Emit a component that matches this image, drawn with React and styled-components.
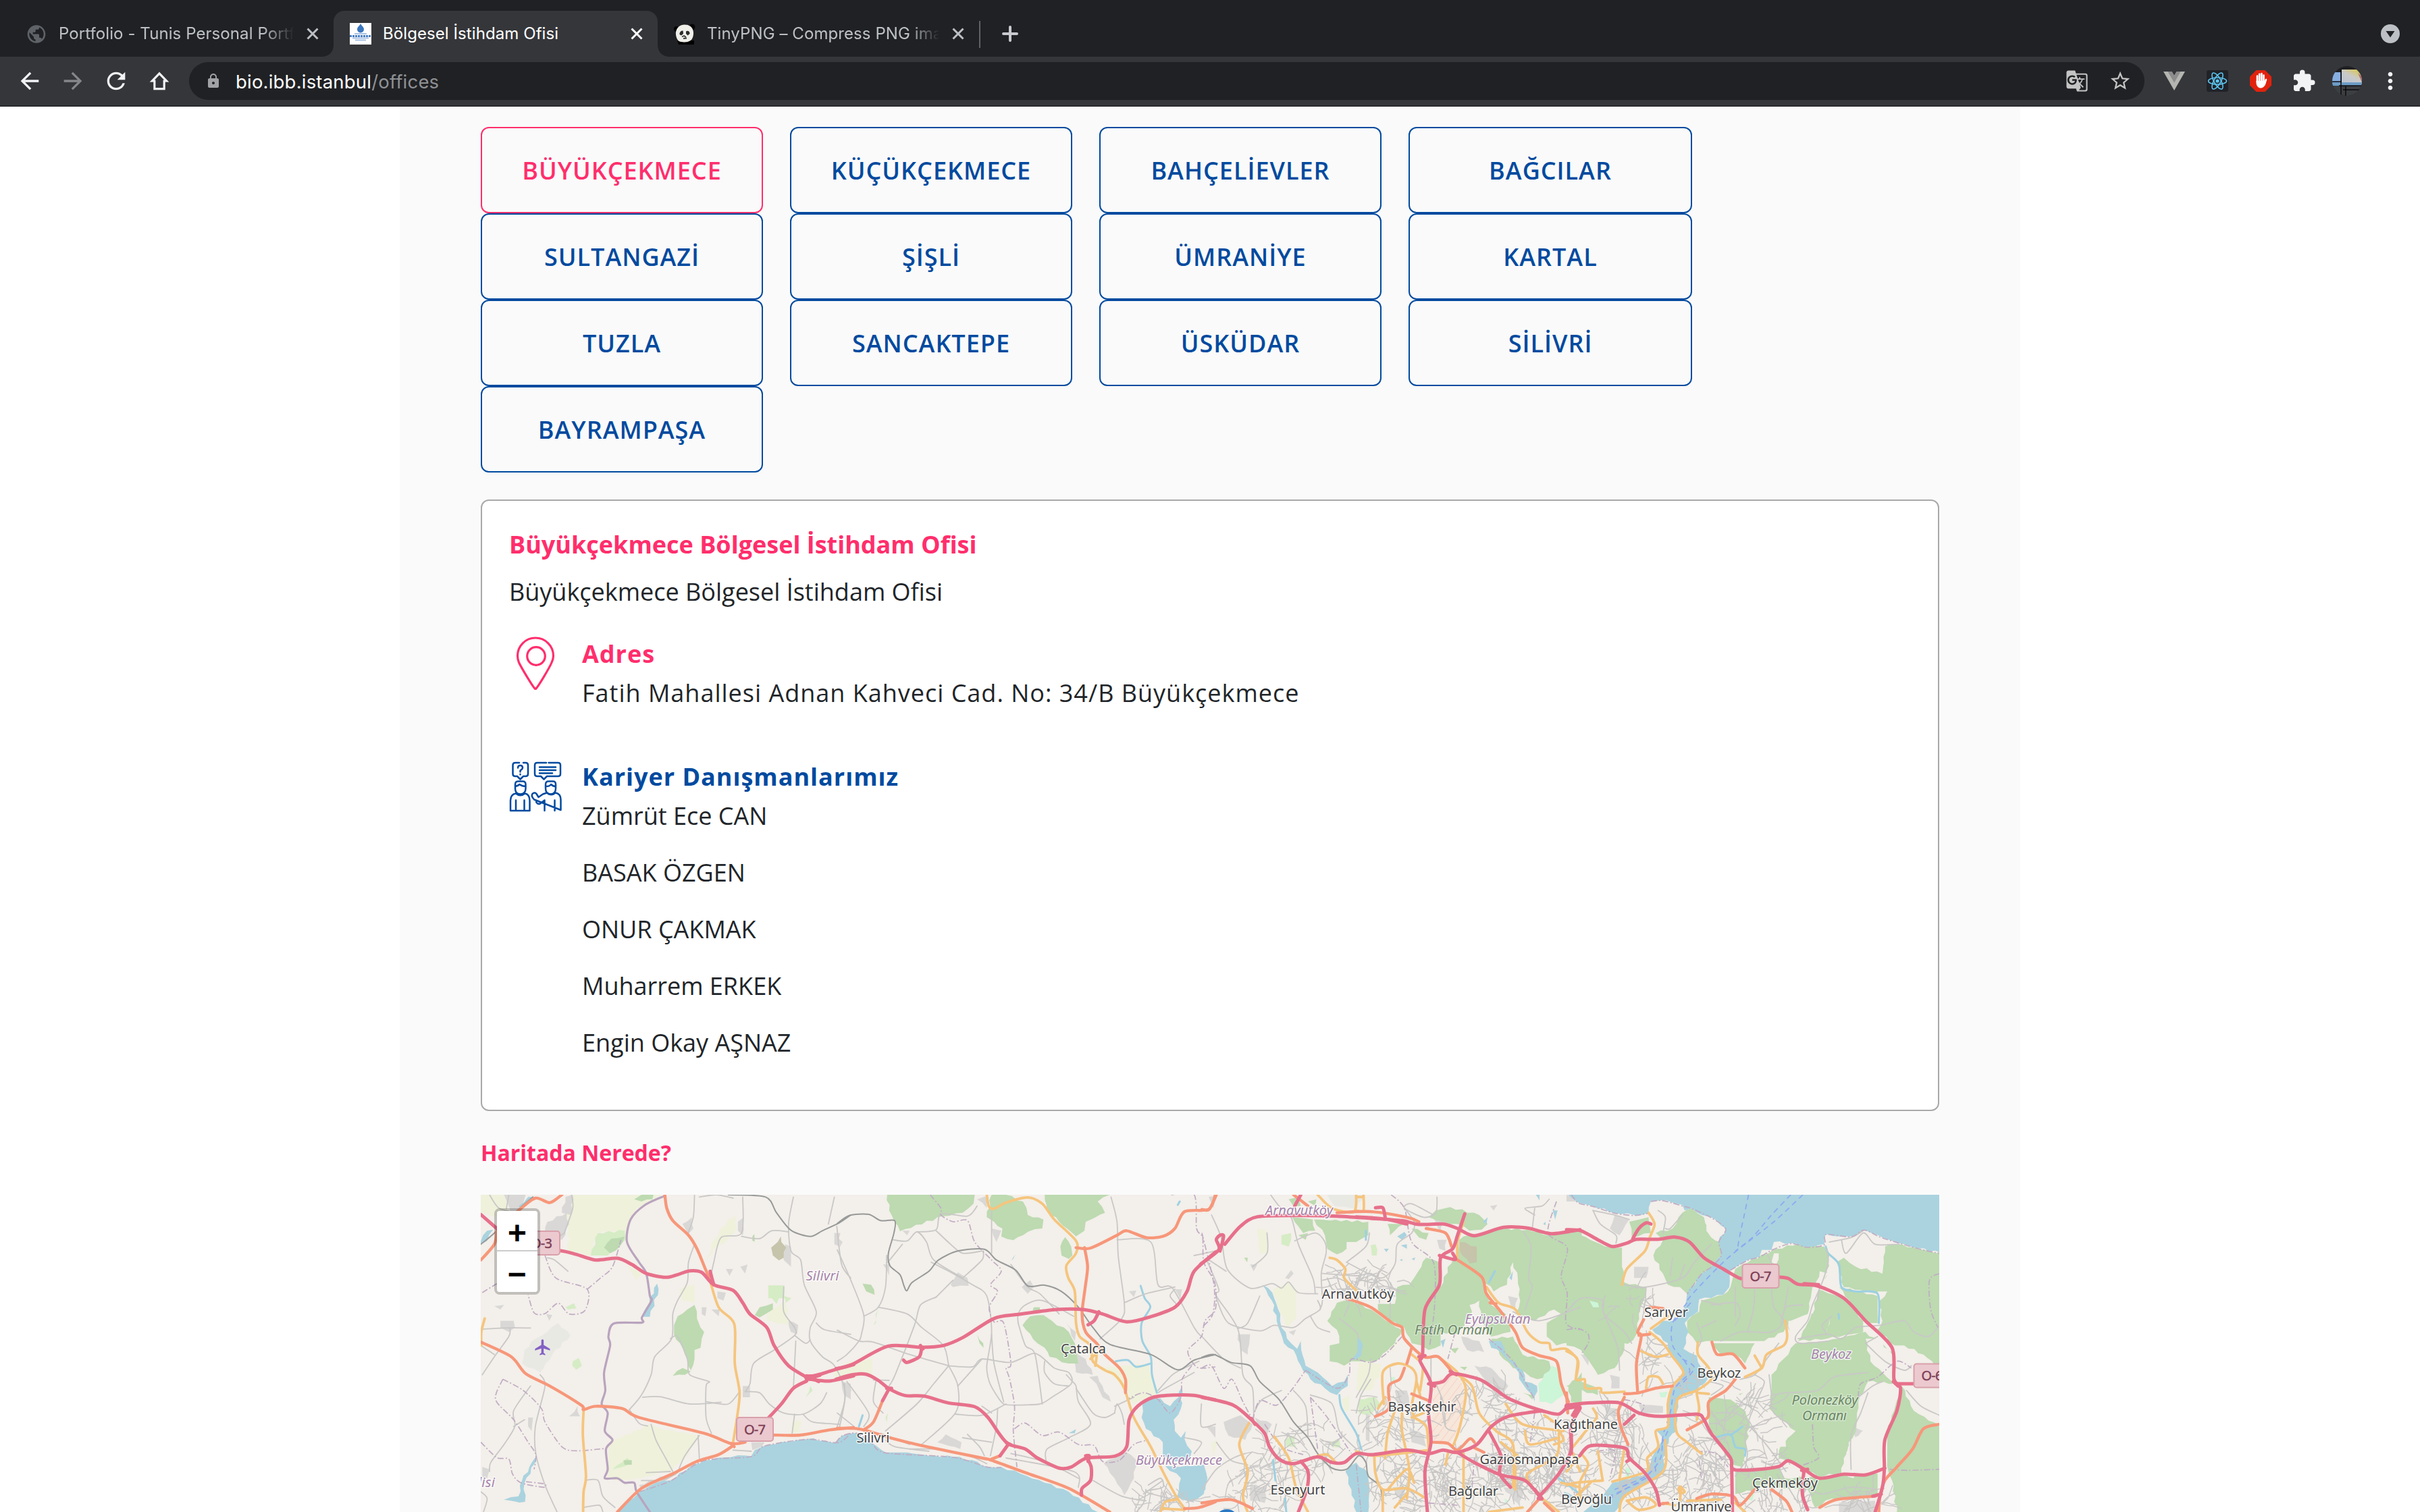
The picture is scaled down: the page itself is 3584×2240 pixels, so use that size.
import React from "react";
import styled, { createGlobalStyle } from "styled-components";
import {
  MdArrowBack,
  MdArrowForward,
  MdRefresh,
  MdLock,
  MdGTranslate,
  MdStarBorder,
  MdExtension,
  MdMoreVert,
  MdPublic,
  MdFlight,
} from "react-icons/md";
import { FaHandPaper } from "react-icons/fa";

const PINK = "#ff2e6c";
const BLUE = "#004a9f";

const GlobalStyle = createGlobalStyle`
  * { box-sizing: border-box; }
  html, body { margin: 0; padding: 0; background: #fff; }
  body { width: 3584px; height: 2240px; overflow: hidden; font-family: "Open Sans", "Noto Sans", sans-serif; }
`;

const Window = styled.div`
  display: flex;
  flex-direction: column;
  width: 3584px;
  height: 2240px;
  overflow: hidden;
`;

/* ---------- browser frame ---------- */

const TabStrip = styled.div`
  display: flex;
  align-items: stretch;
  flex: none;
  height: 84px;
  padding: 16px 30px 0 14px;
  background: #202124;
  font-family: Inter, Roboto, sans-serif;
`;

const Tab = styled.div`
  position: relative;
  display: flex;
  align-items: center;
  flex: none;
  width: ${(p) => p.$width}px;
  padding: 0 17px 0 24px;
  border-radius: 16px 16px 0 0;
  background: ${(p) => (p.$active ? "#35363a" : "transparent")};
  color: ${(p) => (p.$active ? "#fff" : "#bdc1c6")};

  &::before,
  &::after {
    content: "";
    display: ${(p) => (p.$active ? "block" : "none")};
    position: absolute;
    bottom: 0;
    width: 16px;
    height: 16px;
  }
  &::before {
    left: -16px;
    background: radial-gradient(circle at 0 0, transparent 15.5px, #35363a 16px);
  }
  &::after {
    right: -16px;
    background: radial-gradient(circle at 100% 0, transparent 15.5px, #35363a 16px);
  }
`;

const Favicon = styled.span`
  display: flex;
  align-items: center;
  justify-content: center;
  flex: none;
  width: 32px;
  height: 32px;
  margin-right: 17px;
`;

const TabTitle = styled.span`
  flex: 1;
  overflow: hidden;
  white-space: nowrap;
  font-size: 24px;
  line-height: 32px;
  letter-spacing: 0.08px;
  margin-right: 10px;
  ${(p) =>
    p.$fade &&
    "-webkit-mask-image: linear-gradient(90deg, #000 86%, transparent 99%); mask-image: linear-gradient(90deg, #000 86%, transparent 99%);"}
`;

const CloseMark = styled.svg`
  flex: none;
  width: 28px;
  height: 28px;
  stroke: currentColor;
  stroke-width: 3;
`;

const TabDivider = styled.span`
  align-self: flex-start;
  width: 2px;
  height: 40px;
  margin: 15px 34px 0 0;
  background: #5f6368;
`;

const NewTab = styled.svg`
  width: 24px;
  height: 24px;
  align-self: center;
  stroke: #c8cacf;
  stroke-width: 4;
  stroke-linecap: round;
  margin-left: -2px;
`;

const TabSearch = styled.svg`
  width: 28px;
  height: 28px;
  align-self: center;
  margin-left: auto;
`;

const Toolbar = styled.div`
  display: flex;
  align-items: center;
  flex: none;
  height: 74px;
  padding: 0 0 0 24px;
  background: #35363a;
  border-bottom: 2px solid #28292c;
  color: #f1f3f4;
  font-family: Inter, Roboto, sans-serif;
`;

const NavButtons = styled.div`
  display: flex;
  flex: none;
  gap: 24px;
  width: 256px;
`;

const NavIcon = styled.span`
  display: flex;
  width: 40px;
  height: 40px;
  color: ${(p) => (p.$dim ? "#85868a" : "#f1f3f4")};
`;

const AddressBar = styled.div`
  display: flex;
  align-items: center;
  flex: none;
  width: 2896px;
  height: 56px;
  padding: 0 19px 0 24px;
  border-radius: 28px;
  background: #202124;
  color: #a0a2a6;
`;

const Url = styled.div`
  flex: 1;
  margin-left: 21px;
  font-size: 27.500px;
  line-height: 36px;
  letter-spacing: 0.2px;
  padding-top: 1px;
  color: #8f9195;
  b { font-weight: 400; color: #fff; }
`;

const BarIcons = styled.div`
  display: flex;
  gap: 30px;
  color: #c4c4c4;
`;

const Extensions = styled.div`
  display: flex;
  align-items: center;
  flex: none;
  padding-left: 12px;
`;

const ExtensionSlot = styled.span`
  display: flex;
  align-items: center;
  justify-content: center;
  width: 64px;
  height: 48px;
`;

function Close() {
  return (
    <CloseMark viewBox="0 0 28 28">
      <path d="M6.5 6.5l15 15M21.5 6.5l-15 15" />
    </CloseMark>
  );
}

function MunicipalityFavicon() {
  return (
    <svg width="32" height="32" viewBox="0 0 32 32">
      <rect width="32" height="32" fill="#fff" />
      <path d="M16 1c1 3 5 5 5 8.500a5 5 0 0 1-10 0C11 6 15 4 16 1z" fill="#3a76be" />
      <path d="M7 16h18M4 22.500h24M8 25.500h16" stroke="#a9c2e4" strokeWidth="1.800" />
      <path d="M0 19.500h32" stroke="#4b7fc3" strokeWidth="3" strokeDasharray="3 1" />
    </svg>
  );
}

function PandaFavicon() {
  return (
    <svg width="32" height="32" viewBox="0 0 32 32">
      <path d="M5 26h25v6H7z" fill="#000" />
      <circle cx="4" cy="9" r="4" fill="#000" />
      <circle cx="27" cy="6" r="4.500" fill="#050505" />
      <path d="M16 2.500C24 2.500 29 8 29 15c0 4-1 7-3 10-3 2.500-6 3.500-10 3.500S6.500 28 5 24C3.500 21 2.500 17 3 13.500 4 7 9 2.500 16 2.500z" fill="#f1efe9" />
      <path d="M8.500 17c-.5-3 2-6 5-5.500l.5 4c-1 2-3 4-5.500 1.500zM18 12.500c2.500-2 6 0 5.500 3.500l-3 2.500-2.500-2.500z" fill="#2b2b2b" />
      <path d="M12 20.500l3-1.500 3 2M14 23l5-.5" fill="none" stroke="#3a3a3a" strokeWidth="1.800" />
    </svg>
  );
}

function BrowserTabs() {
  return (
    <TabStrip>
      <Tab $width={480}>
        <Favicon><MdPublic size={33} color="#5f6368" /></Favicon>
        <TabTitle $fade>Portfolio - Tunis Personal Portfolio</TabTitle>
        <Close />
      </Tab>
      <Tab $width={480} $active>
        <Favicon><MunicipalityFavicon /></Favicon>
        <TabTitle>Bölgesel İstihdam Ofisi</TabTitle>
        <Close />
      </Tab>
      <Tab $width={476}>
        <Favicon><PandaFavicon /></Favicon>
        <TabTitle $fade>TinyPNG – Compress PNG images</TabTitle>
        <Close />
      </Tab>
      <TabDivider />
      <NewTab viewBox="0 0 24 24"><path d="M12 2v20M2 12h20" /></NewTab>
      <TabSearch viewBox="0 0 28 28">
        <circle cx="14" cy="14" r="14" fill="#bdc1c6" />
        <path d="M7.500 10h13L14 19.500z" fill="#202124" />
      </TabSearch>
    </TabStrip>
  );
}

function VueMark() {
  return (
    <svg width="32" height="28" viewBox="0 0 32 28">
      <path d="M0 0h12.500L16 6l3.500-6H32L16 28z" fill="#b4b4b0" />
      <path d="M6.500 0h6L16 6l3.500-6h6L16 16.500z" fill="#8b8c8c" />
    </svg>
  );
}

function ReactMark() {
  return (
    <svg width="32" height="32" viewBox="0 0 32 32">
      <rect width="32" height="32" rx="3" fill="#202228" />
      <g fill="none" stroke="#5cc4ef" strokeWidth="1.600">
        <ellipse cx="16" cy="16" rx="13.500" ry="5" />
        <ellipse cx="16" cy="16" rx="13.500" ry="5" transform="rotate(60 16 16)" />
        <ellipse cx="16" cy="16" rx="13.500" ry="5" transform="rotate(120 16 16)" />
      </g>
      <circle cx="16" cy="16" r="2.600" fill="#5cc4ef" />
    </svg>
  );
}

function BlockerMark() {
  return (
    <svg width="32" height="32" viewBox="0 0 32 32">
      <path d="M9.500 0h13L32 9.500v13L22.500 32h-13L0 22.500v-13z" fill="#e1230e" />
      <g fill="#fff" stroke="#fff" strokeLinecap="round" strokeWidth="2.700">
        <path d="M11 8.500v10M14.200 5.800v12M17.400 5.200v12M20.500 7.500v11M24 14l-2.500 7" />
        <path d="M9.800 16h12v4l1.500-2c0 4-3 8.200-7.300 8.200S9.800 22 9.800 19z" strokeWidth="0.500" />
      </g>
    </svg>
  );
}

function Avatar() {
  return (
    <svg width="44" height="44" viewBox="0 0 44 44">
      <defs>
        <clipPath id="avatarClip"><circle cx="22" cy="22" r="22" /></clipPath>
        <linearGradient id="avatarSky" x1="0" y1="1" x2=".7" y2="0">
          <stop offset="0" stopColor="#b9c3d4" />
          <stop offset=".6" stopColor="#c9c9c8" />
          <stop offset="1" stopColor="#d8c85f" />
        </linearGradient>
      </defs>
      <g clipPath="url(#avatarClip)">
        <rect width="44" height="44" fill="#1e1f22" />
        <rect y="9" width="13" height="20" fill="#86aee0" />
        <rect x="14" y="5" width="30" height="22" fill="url(#avatarSky)" />
        <path d="M38 10l6 6v8z" fill="#a96a74" />
        <path d="M0 24h44v5H0z" fill="#6c9cc4" />
        <path d="M0 29h44v15H0z" fill="#3c3f42" />
        <path d="M0 23h13M13 5v38M10 29h34M16 35h28M20 30v14" stroke="#0b0b0c" strokeWidth="1.500" />
      </g>
    </svg>
  );
}

function BrowserToolbar() {
  return (
    <Toolbar>
      <NavButtons>
        <NavIcon><MdArrowBack size={40} /></NavIcon>
        <NavIcon $dim><MdArrowForward size={40} /></NavIcon>
        <NavIcon><MdRefresh size={40} /></NavIcon>
        <NavIcon>
          <svg width="40" height="40" viewBox="0 0 24 24" fill="none" stroke="currentColor" strokeWidth="1.900">
            <path d="M12 5.300L5.600 12H7.700v7h8.600v-7h2.100z" />
          </svg>
        </NavIcon>
      </NavButtons>
      <AddressBar>
        <MdLock size={24} />
        <Url><b>bio.ibb.istanbul</b>/offices</Url>
        <BarIcons>
          <MdGTranslate size={34} />
          <MdStarBorder size={34} />
        </BarIcons>
      </AddressBar>
      <Extensions>
        <ExtensionSlot><VueMark /></ExtensionSlot>
        <ExtensionSlot><ReactMark /></ExtensionSlot>
        <ExtensionSlot><BlockerMark /></ExtensionSlot>
        <ExtensionSlot><MdExtension size={36} /></ExtensionSlot>
        <ExtensionSlot><Avatar /></ExtensionSlot>
        <ExtensionSlot><MdMoreVert size={40} /></ExtensionSlot>
      </Extensions>
    </Toolbar>
  );
}

/* ---------- page ---------- */

const Page = styled.main`
  flex: 1;
  width: 2400px;
  margin: 0 auto;
  padding: 30px 120px 0;
  background: #fafafa;
  overflow: hidden;
`;

const OfficeGrid = styled.div`
  display: grid;
  grid-template-columns: 418px 418px 418px 420px;
  column-gap: 40px;
  grid-auto-rows: 128px;
`;

const OfficeButton = styled.button`
  padding: 1px 0 0;
  border: 2px solid ${(p) => (p.$selected ? PINK : BLUE)};
  border-radius: 12px;
  background: #fafafa;
  box-shadow: 0 4px 4px rgba(0, 0, 0, 0.012);
  color: ${(p) => (p.$selected ? PINK : BLUE)};
  font: 600 36px/54px "Open Sans", "Noto Sans", sans-serif;
  letter-spacing: 1px;
`;

const Card = styled.section`
  height: 906px;
  margin-top: 40px;
  padding: 38px 40px 0;
  border: 2px solid #a9a9a9;
  border-radius: 12px;
  background: #fff;
  color: #212529;
  font-size: 36px;
  line-height: 54px;
`;

const CardTitle = styled.h2`
  margin: 0 0 16px;
  font-size: 36px;
  line-height: 54px;
  font-weight: 700;
  color: ${PINK};
`;

const Plain = styled.p`
  margin: 0;
`;

const InfoRow = styled.div`
  display: flex;
  margin-top: ${(p) => p.$top}px;
`;

const InfoIcon = styled.svg`
  flex: none;
  width: 78px;
  height: 80px;
  margin-right: 30px;
  fill: none;
  stroke-linecap: round;
  stroke-linejoin: round;
`;

const InfoTitle = styled.h3`
  margin: 0 0 4px;
  font-size: 36px;
  line-height: 54px;
  font-weight: 700;
  letter-spacing: 1px;
  color: ${(p) => p.$color};
`;

const Address = styled.p`
  margin: 0;
  letter-spacing: 1px;
`;

const People = styled.ul`
  display: grid;
  gap: 30px;
  margin: 0;
  padding: 0;
  list-style: none;
`;

const MapTitle = styled.h2`
  margin: 40px 0 40px;
  font-size: 32px;
  line-height: 44px;
  font-weight: 700;
  color: ${PINK};
`;

const MapFrame = styled.div`
  position: relative;
  width: 2160px;
  height: 470px;
  overflow: hidden;
  background: #f3efea;
`;

const MapCanvas = styled.svg`
  display: block;
  width: 2160px;
  height: 470px;
`;

const ZoomControl = styled.div`
  position: absolute;
  left: 20px;
  top: 20px;
  display: flex;
  flex-direction: column;
  width: 68px;
  border: 4px solid rgba(0, 0, 0, 0.2);
  border-radius: 8px;
  background-clip: padding-box;
`;

const ZoomButton = styled.button`
  display: flex;
  align-items: center;
  justify-content: center;
  width: 60px;
  height: 60px;
  padding: ${(p) => (p.$first ? "14px" : "13px")} 0 0;
  border: 0;
  border-bottom: ${(p) => (p.$first ? "2px solid #ccc" : "0")};
  border-radius: ${(p) => (p.$first ? "4px 4px 0 0" : "0 0 4px 4px")};
  background: #fff;
  color: #000;
  font: bold 48px/46px "Liberation Mono", monospace;
`;

const OFFICES = [
  "BÜYÜKÇEKMECE", "KÜÇÜKÇEKMECE", "BAHÇELİEVLER", "BAĞCILAR",
  "SULTANGAZİ", "ŞİŞLİ", "ÜMRANİYE", "KARTAL",
  "TUZLA", "SANCAKTEPE", "ÜSKÜDAR", "SİLİVRİ",
  "BAYRAMPAŞA",
];

const ADVISORS = ["Zümrüt Ece CAN", "BASAK ÖZGEN", "ONUR ÇAKMAK", "Muharrem ERKEK", "Engin Okay AŞNAZ"];

function PinIcon() {
  return (
    <InfoIcon viewBox="0 0 78 80" stroke={PINK} strokeWidth="3.200">
      <path d="M39 79C36 77 18 47 14.500 39.500C12.500 35 12.500 32 12.500 29.500a26.500 26.500 0 0 1 53 0c0 2.500-.2 5.500-2.500 10C60 47 42 77 39 79z" />
      <circle cx="40" cy="30" r="13.300" />
    </InfoIcon>
  );
}

function AdvisorsIcon() {
  return (
    <InfoIcon viewBox="0 0 78 80" stroke={BLUE} strokeWidth="2.500">
      <path d="M15 6H9q-3.500 0-3.500 3.500v13Q5.500 26 9 26h3l4.500 4.500L21 26h3.500q3.500 0 3.500-3.500v-13Q28 6 24.500 6H21" />
      <path d="M13 13.500q0-3.500 3.500-3.500t3.500 3.300q0 2-3.500 4.200v2M16.500 23v.6" />
      <path d="M55 6H41.500Q38 6 38 9.500v13q0 3.500 3.500 3.500H47l4.500 4.500L56 26h16.500q3.500 0 3.500-3.500v-13Q76 6 72.500 6H58.500" />
      <path d="M45 12.500h24M45 17h24M45 21.500h19" />
      <path d="M9 44v-6q0-4.500 4.500-4.500H20q4.500 0 4.500 4.500v6q0 8.500-7.800 8.500T9 44zM9.500 41q4-1 6-3 4 3 9 3" />
      <path d="M2 77V62q0-9 8-10.500 6.500 5.500 13.500 0 7 1.500 7 10.500v15zM10 61.500V77M22.500 61.500V77" />
      <path d="M54 44v-6q0-4.500 4.500-4.500H65q4 0 4 4.500v6q0 8.500-7.500 8.500T54 44zM54.500 41q6 0 7.500-3 3 3 7 3" />
      <path d="M52.500 77V61.500l-6.500 5q-4 1.500-6-2.500M37 60.500q-5-5.500-2.500-8.500 3.500-3 6 0l3 5 6.500-4.500 6-2q6.500 5.500 12.500 0 8 1.500 8 10v15.500zM67.500 61.500V77" />
    </InfoIcon>
  );
}

/* ---------- map ---------- */

/* Each sheet covers a 560-unit wide strip; its points use the sheet's own grid. */
const SHEETS = [
  {
    x: 700,
    farm: [
      "34,30 130,30 150,100 90,130 34,110",
      "410,30 790,30 680,90 650,150 640,200 540,190 500,240 490,300 395,280 400,180 370,150 410,90",
      "1000,230 1060,140 1090,125 1095,180 1050,240 1000,270 970,330",
      "560,1290 565,1130 740,1050 780,1070 940,1100 880,1200 830,1250 700,1290 600,1300",
      "1220,560 1300,500 1310,610 1220,590",
      "1330,1030 1365,1040 1350,1090 1320,1090",
      "1500,810 1580,800 1580,850 1500,850",
      "860,450 920,430 920,510 870,500", "640,340 700,380 680,410",
    ],
    scrub: ["490,300 520,200 630,190 635,230 560,300", "415,770 440,755 453,790 430,808 413,790", "1290,480 1322,490 1300,510", "580,1250 640,1200 660,1215 620,1240", "1226,433 1293,433 1293,490 1270,490 1260,515 1240,490 1226,490", "1380,930 1400,880 1410,900", "385,530 420,512 430,535 395,540"],
    forest: [
      "835,610 850,570 890,540 920,520 930,580 945,620 960,640 950,670 945,710 920,720 920,760 905,810 880,740 860,690 835,650",
      "830,835 870,800 905,815 880,830", "545,265 575,225 630,215 610,260 570,290",
      "1170,565 1190,530 1245,512 1245,540 1190,575", "670,50 700,30 750,30 745,50 700,60", "1160,215 1168,205 1170,238 1160,235",
      "625,1210 660,1210 660,1230 630,1230",
    ],
    water: [
      "597,1440 640,1395 690,1352 760,1310 820,1300 900,1240 960,1210 1040,1198 1100,1188 1155,1192 1170,1165 1210,1145 1300,1128 1390,1115 1460,1122 1515,1130 1540,1100 1580,1088 1580,1440",
      "130,1385 190,1370 205,1300 235,1240 262,1195 240,1270 215,1310 217,1395 170,1392",
      "706,572 720,530 765,425 771,450 735,572", "34,235 60,190 85,185 60,235 34,250", "190,80 230,40 250,40 200,90",
    ],
    grey: ["130,30 220,30 200,90 160,110", "310,150 390,110 400,160 370,230 300,200", "385,40 415,30 410,120 370,110", "115,590 170,590 175,620 150,640 115,620", "400,1015 435,970 445,1015", "870,160 910,130 915,180 890,210", "1295,250 1320,260 1320,350 1290,320", "1310,590 1350,610 1345,650 1320,640", "1120,880 1150,880 1150,930 1120,930", "1530,860 1568,870 1568,940 1540,920", "690,1320 800,1280 880,1250 800,1300 700,1340", "1155,1130 1210,1130 1200,1150 1160,1165", "1015,460 1050,465 1040,500 1015,490", "950,530 970,530 965,570 950,560", "990,540 1025,540 1020,570", "40,1240 70,1250 60,1290 40,1290", "305,560 330,565 318,590", "90,525 130,520 115,540", "230,1020 250,1020 245,1080 230,1060", "1100,150 1125,130 1120,210 1100,190", "1500,200 1525,200 1520,260 1500,250", "1110,350 1140,340 1130,380", "1050,360 1080,360 1065,390"],
    quarry: ["1238,265 1265,240 1278,215 1280,240 1300,265 1290,310 1270,322 1245,300"],
    pale: ["215,720 260,670 310,640 355,600 405,655 330,740 280,820 205,780"],
    minor: [
      "920,30 915,130 890,210", "920,250 895,330 890,420 850,500 830,560 825,670 755,750 740,830 700,920 650,985",
      "820,670 850,660 890,760 900,830 980,860 968,880 968,1020 990,1090", "1120,40 1115,200 1030,220 1000,330 990,380", "940,40 1010,30 1080,45",
      "705,930 780,928 900,960 1030,952", "155,625 150,660 90,750 40,830", "34,628 130,622 240,622", "310,310 340,320 395,370",
      "1115,215 1190,225 1240,190 1310,195", "1330,40 1310,160 1320,280 1360,320 1375,430 1425,550 1400,620 1400,680 1450,750 1500,790 1545,910 1520,1070",
      "1425,600 1460,630 1568,650", "1500,40 1475,160", "1510,170 1530,340 1568,400", "1290,440 1290,550 1335,620 1335,655 1250,720 1165,780 1150,870 1130,905",
      "1335,655 1380,690 1400,675", "1340,680 1330,890", "1130,905 1190,910 1230,960 1290,1000 1370,1005 1440,960 1468,910", "1335,1005 1325,1090",
      "1370,1005 1410,1040 1520,1050", "740,1050 760,1120 800,1200 830,1260", "940,1100 880,1190 855,1250", "935,1100 940,1200", "280,830 300,880 260,1060 262,1180 300,1320 350,1440",
      "240,880 170,990 175,1060 130,1140 75,1220 70,1260", "34,1350 60,1380 45,1440", "470,1298 520,1300 540,1370 590,1420", "650,985 690,1045 725,1058",
      "410,30 415,90 380,200", "70,30 110,90 190,110", "150,30 140,90", "380,200 300,260", "700,1300 800,1295 880,1240", "720,1265 820,1260", "1080,1165 1155,1170", "460,1420 525,1410 540,1440",
      "170,1060 215,1030", "1110,900 1060,960 970,950", "34,700 90,740",
    ],
    dash: [
      "300,300 345,400 475,450 465,545 400,560 355,512 300,558 255,555 230,475", "475,450 530,400 580,350 615,230",
      "125,850 95,940 170,1030 230,1130 262,1185 255,1250", "125,850 210,900 285,980 300,1040 370,1150 430,1168 545,1158",
      "34,1130 100,1198 150,1205 165,1270 200,1310 295,1330 295,1315 220,1305", "40,465 100,425",
      "690,1350 820,1302 960,1212 1155,1194 1210,1147 1390,1117 1515,1132 1568,1090",
    ],
    border: ["797,35 715,75 655,140 640,240 690,330 720,380 735,480 742,500 702,575 702,598 585,602 563,660 570,700 545,820 550,900 535,960 560,1000 548,1080 580,1120 553,1160 560,1250 548,1290 600,1290 630,1310 670,1310 680,1350 735,1440"],
    rail: ["1060,30 1215,40 1260,110 1320,188 1400,215 1450,190 1520,155 1568,120", "34,250 90,200 190,95 250,40"],
    secondary: ["50,580 36,640 36,700", "980,395 1020,530 1085,605 1087,780 1107,910 1095,1030 1080,1130", "460,990 457,1100 470,1280 460,1350 458,1440"],
    primary: ["34,320 90,250 100,190", "190,100 260,45 320,65 370,30", "797,30 805,90 830,145 895,210 930,270 965,360 980,395", "34,685 160,750 220,825 320,880 450,965 460,985 510,970 620,980 690,1020 960,1090 1070,1135 1130,1130", "1080,1145 1020,1185 930,1215 830,1270 700,1335 600,1440", "1070,1135 1085,1150", "1248,1098 1360,1098 1480,1075 1580,1065"],
    motorway: ["34,118 100,180", "200,262 362,278 430,295 510,320 600,312 660,340 720,380 800,397 850,385 900,368 950,375 1000,430 1080,455 1120,510 1150,560 1220,620 1250,700 1310,790 1400,850", "985,370 992,400 1000,430", "1400,838 1440,828 1500,808 1580,785", "1400,850 1480,858 1580,835", "1385,858 1330,890 1280,960 1215,1035", "1385,835 1435,860", "1385,850 1440,832"],
  },
  {
    x: 1240,
    farm: ["0,800 60,770 145,760 145,830 0,850", "1110,800 1290,780 1320,920 1230,960 1200,900"],
    scrub: ["170,540 160,600 150,610", "200,1020 210,1000 205,1040"],
    forest: [
      "207,30 570,30 565,70 520,110 440,125 260,192 215,100",
      "640,30 700,30 770,60 790,120 855,140 850,180 790,195 730,232 680,215 685,180 650,150 620,130",
      "860,30 1130,30 1080,60 1110,110 1030,150 1025,190 990,215 920,150 870,100",
      "925,260 945,218 970,260 975,300 960,315 930,300", "768,610 800,570 855,565 890,590 960,640 985,690 1000,780 960,780 880,750 860,710 830,690",
      "105,425 140,430 155,475 120,460", "580,650 605,690 607,710 590,690", "815,530 840,530 840,550 810,545",
    ],
    water: [
      "-10,1130 20,1100 80,1088 140,1130 200,1175 290,1175 380,1190 480,1195 560,1210 620,1238 680,1240 760,1270 860,1310 960,1350 1080,1440 -10,1440",
      "1265,965 1290,940 1340,935 1380,970 1415,930 1428,885 1425,980 1395,1030 1400,1080 1425,1110 1445,1080 1440,1115 1470,1170 1460,1210 1400,1215 1350,1190 1350,1130 1280,1070 1262,1020",
      "1360,1235 1420,1240 1520,1230 1535,1290 1520,1360 1470,1395 1410,1370 1425,1290", "722,322 738,295 730,315", "960,1090 990,1072 985,1090",
    ],
    grey: ["470,430 500,375 540,400 545,435 480,440", "415,1130 450,1095 515,1130 510,1160", "1105,1225 1190,1170 1240,1210 1230,1290 1190,1365 1150,1290 1120,1240", "765,440 800,410 815,440 790,470", "580,50 620,35 620,90", "640,180 680,190 660,240", "1045,840 1080,835 1100,880 1135,950 1100,930 1075,870", "25,870 60,900 40,920", "0,220 22,240 10,265", "190,340 215,340 215,390", "980,720 1030,760 1060,830 990,820", "950,600 990,640 985,680", "1210,460 1240,455 1230,485", "1540,40 1568,35 1560,90", "1400,450 1430,450 1425,500", "1530,1060 1568,1060 1568,1110", "270,190 300,190 290,210"],
    minor: [
      "0,275 60,420 110,565 100,650 90,680 40,740 0,770", "110,570 170,530 200,440 205,300", "170,530 290,560 350,620 440,700 462,790", "462,790 300,740 150,685 90,680 0,632",
      "462,790 400,870 330,960 200,1080", "462,790 560,795 600,760 720,775 820,735 900,800 960,820 970,870 890,930 840,960 740,965", "740,965 690,960 660,920 630,860 620,790 640,640 620,480 560,430 480,380 390,330",
      "230,230 290,235 330,195 370,240 400,320 520,400", "330,195 410,185 430,115 540,125 580,80", "410,190 470,250 520,290 600,280", "640,100 640,290", "520,400 600,320 605,280",
      "410,485 345,520 320,610 240,830 215,880", "410,485 480,410", "462,790 500,880 490,1000 350,1140", "490,1005 600,1010 700,960", "665,980 660,1060 635,1190", "500,880 600,760",
      "750,600 750,560 780,520 850,500 980,570", "750,600 780,700 820,740 850,960", "1135,40 1160,150 1165,300 1190,510 1180,580 1090,670", "1160,230 1300,240 1330,430 1390,445 1480,620 1510,660",
      "1190,510 1280,470 1400,440", "860,770 860,820 900,870 960,880", "950,830 975,860 990,880 1000,950 1050,1050 960,1110 870,1160 865,1210", "990,890 1060,1000 1110,1020 1150,1000",
      "160,860 150,950 190,1000", "150,853 215,855", "0,1000 70,1060", "30,870 30,950 0,1060", "40,860 130,1000 110,1060", "1060,1300 1180,1370 1280,1390", "1270,1360 1350,1300", "1510,960 1510,1060 1568,1050",
      "700,1200 980,1260 1000,1330", "720,1180 870,1220 1000,1290", "1280,1340 1270,1400 1240,1440", "1290,1320 1340,1290 1350,1330 1280,1350 1380,1380", "1150,1000 1160,960 1180,1000 1190,1050", "1150,970 1230,930",
      "1330,900 1390,830 1440,800 1500,770", "1330,910 1360,890 1480,820", "1440,1110 1510,1130 1480,1180", "270,250 210,330", "520,1110 640,1130", "720,340 790,440 840,470 920,560", "640,650 650,780 690,950", "180,1090 300,1140", "200,1120 240,1150 380,1170", "300,1160 420,1160",
      "510,1180 560,1195 620,1225", "1480,300 1568,280", "1400,450 1380,480 1410,520", "600,970 640,1000", "540,1095 590,1150 610,1190",
    ],
    dash: [
      "385,30 430,90 430,120 480,150 540,145 570,240 640,320 680,370 635,430 665,460 630,530 650,595 690,600 720,780 700,800 715,850 735,970 730,1080 745,1240",
      "735,1070 780,1045 850,1100 920,1085 1000,1140 1065,1145 1100,1215 1170,1210 1230,1140 1290,1120",
      "1385,30 1480,30 1490,180 1515,220 1520,330 1565,420 1568,540 1525,590 1510,660 1455,720 1470,770 1500,800 1568,795", "1470,790 1430,850 1425,930 1380,1000 1330,940 1270,910 1200,940",
      "-5,1132 20,1102 80,1090 140,1132 200,1177 480,1197 620,1240 680,1242",
    ],
    rail: ["0,158 50,122 130,117 180,145 238,145 235,200 212,290 218,345 260,385 275,430 288,457 310,420 380,370 420,320 500,280 610,272 660,320 740,365 790,435 860,432 930,460 1000,530 1060,620 1130,695 1300,740 1410,808 1480,765 1568,740"],
    river: ["1258,435 1275,490 1298,530 1262,600 1265,680 1300,750 1305,830 1325,910", "1155,770 1205,765 1240,795 1300,780", "105,1010 90,1060", "1420,60 1412,75"],
    secondary: ["620,30 628,80 650,92 700,65 790,42 850,70 900,140 990,235 990,290 950,345 958,400 985,460 990,600 1005,660 1050,700 1060,770 1110,810 1150,830 1190,890 1230,1020 1300,1150 1350,1260 1405,1370 1440,1425", "1050,760 1075,740 1070,790", "1340,1440 1360,1395 1405,1385", "1350,1425 1440,1430"],
    primary: ["188,945 150,1040 110,1075", "0,1068 60,1068 110,1075 225,1112 350,1145 600,1200 640,1210 780,1265 960,1335 1130,1440", "640,1205 675,1190", "990,265 1050,267 1160,210 1200,190 1280,220 1350,215 1400,180 1440,105 1540,95 1568,30", "1025,265 1038,350 1027,450 1015,560 1030,640 1075,690 1110,740 1170,800 1195,850 1195,910", "1440,1425 1500,1420 1568,1395"],
    motorway: [
      "-5,803 60,785 210,703 350,708 440,700 520,665 650,580 750,562 910,540 1020,540 1100,560 1200,595 1300,572 1400,530 1450,460 1480,370 1568,285",
      "-5,850 60,830 120,828 170,855 215,892 280,922 360,925 460,955 570,972 625,1020 670,1090 710,1138 780,1160 830,1200 920,1245 970,1240 1035,1200 1150,1192 1200,1150 1210,1030 1245,970 1310,930 1400,920 1480,922 1568,942",
      "350,708 340,750 290,775 275,765", "215,892 188,945", "710,1138 675,1190", "1035,1200 1053,1240 1050,1300 1015,1335 1013,1365", "1085,550 1065,590 1040,608", "1030,1190 1045,1190 1040,1215", "205,890 225,890", "345,700 355,715", "702,1132 718,1140",
    ],
  },
  {
    x: 1780,
    farm: ["295,450 360,420 390,460 390,580 360,620 325,560", "230,180 270,190 270,290 240,290", "650,770 740,780 740,820 700,900 640,900", "580,940 610,920 610,990 590,990", "770,690 820,680 790,730", "40,1130 65,1120 50,1190"],
    scrub: ["650,940 720,930 740,960 700,1010 650,1000", "345,1120 385,1100 390,1150 350,1150", "530,1130 570,1115 575,1155 540,1150", "330,210 370,200 360,260 330,250", "700,255 720,250 725,300 705,300"],
    forest: [
      "375,130 460,140 470,190 420,200 400,170", "465,140 690,150 690,210 640,240 600,240 600,270 560,295 520,270 510,210", "770,160 840,160 800,190 780,210",
      "940,130 970,100 1030,85 1150,120 1185,160 1160,185 1110,190 1060,160 1000,150", "870,180 940,200 930,230 900,220",
      "1085,215 1140,210 1240,180 1350,185 1440,210 1575,190 1575,700 1500,690 1470,700 1430,660 1430,600 1490,560 1460,540 1380,590 1300,560 1320,500 1310,400 1290,330 1265,430 1210,460 1160,400 1120,360 1060,330 1068,230",
      "880,400 910,350 930,310 985,330 990,440 1040,310 1100,330 1160,400 1200,520 1260,560 1280,640 1200,660 1160,600 1150,500 1110,520 1120,550 1060,650 990,640 990,700 940,720 910,700 870,690 840,620 780,590 730,540 730,515 800,515 810,440 860,430",
      "520,590 560,510 620,500 700,540 780,600 830,630 800,690 720,770 620,770 590,790 530,770 530,700 570,690 560,630",
      "1200,670 1290,660 1330,740 1440,770 1450,830 1390,850 1340,820 1290,800 1250,760", "1520,880 1575,820 1575,960 1530,950", "360,50 400,40 410,80 380,80", "440,60 475,50 470,80", "175,310 190,310 188,330", "400,210 440,200 430,230", "1030,715 1065,710 1050,735", "1070,795 1100,795 1090,810", "1330,910 1380,920 1370,940",
    ],
    mint: ["1395,870 1450,790 1475,800 1500,920 1450,960 1400,950", "785,840 800,840 800,870 785,870", "1255,1380 1270,1390 1260,1410"],
    hatch: ["960,865 1040,830 1075,860 1090,900 1085,960 1060,1080 1030,1130 950,1120"],
    pale: ["520,30 670,30 640,90 550,80"],
    water: [
      "250,430 275,445 300,490 325,560 330,620 370,690 395,715 410,680 412,720 430,790 480,820 540,880 590,860 605,830 605,880 560,920 510,890 450,850 410,790 380,720 340,690 310,590 290,500",
      "645,660 668,700 660,745 620,765 645,730", "595,1260 640,1220 690,1270 695,1340 690,1440 640,1440 620,1340", "1190,680 1240,680 1260,740 1330,810 1340,860 1390,880 1380,950 1370,920 1330,870 1300,800 1240,730 1200,710",
      "-20,1240 10,1245 20,1290 15,1340 -20,1370", "810,215 840,195 850,210 830,230", "825,255 850,250 850,270", "755,270 775,270 765,285", "1165,150 1185,130 1180,160", "1455,100 1475,100 1465,140", "1385,30 1400,30 1400,55", "1520,30 1575,30 1575,70", "1415,160 1425,150 1425,165", "870,315 885,308 880,322", "820,320 832,315 830,325", "990,680 1010,670 1000,710", "1275,400 1290,370 1285,410", "1535,520 1545,480 1540,530",
    ],
    grey: ["90,1040 160,1010 210,1050 180,1120 110,1100", "1030,350 1100,350 1090,410 1050,390", "1130,790 1200,800 1270,880 1250,910 1180,860", "1075,660 1150,680 1170,730 1100,720", "345,400 370,365 380,380 360,405", "200,340 230,340 215,370", "1195,80 1225,75 1210,100", "200,1320 270,1330 260,1400 200,1390", "975,230 1015,230 1010,280 985,270", "1270,480 1310,490 1300,540 1280,520", "360,640 390,630 380,655", "680,1000 695,1010 695,1130 680,1120", "860,1060 920,1100 930,1150 870,1130", "220,1020 290,1050 270,1110", "150,650 200,650 190,740 160,720", "960,130 1000,130 990,200", "800,900 850,900 860,960 810,960", "790,1330 840,1330 830,1400", "1250,1330 1330,1340 1320,1420"],
    quarry: ["1070,240 1140,260 1140,330 1110,335 1070,280"],
    minor: [
      "40,120 80,220 105,360 200,445 290,425 330,445 360,418 400,465 480,470", "20,320 70,450 60,480 150,630 170,830 210,890 215,1030", "60,490 110,600 240,635 300,610 380,620 430,580 490,540 480,500",
      "240,480 190,600 150,625", "385,235 470,200 510,240 515,290 495,380 500,500 490,540", "270,200 270,290 210,350", "285,30 320,80 370,130 400,250 460,400 470,470", "695,200 680,260 600,330",
      "600,330 740,400 800,340 810,250 870,200 880,150 840,90", "500,380 640,390 700,380 740,410", "975,40 970,110 920,130 840,90 870,70 960,120", "1330,190 1365,260 1355,400 1370,440 1340,540", "1380,90 1370,180", "1440,50 1410,80 1340,90 1380,120",
      "1290,550 1400,590 1568,530", "30,320 100,370", "0,660 90,760 160,800", "500,410 560,400 620,430", "520,400 540,450", "640,400 700,420 760,410 780,460 780,580", "560,390 580,450 640,470", "720,400 740,460 800,480", "450,570 480,620 530,640", "610,520 590,570", "570,580 640,640 650,670",
      "990,930 1010,1060 1050,1080", "950,750 950,850", "970,870 1000,950 1010,1050", "220,990 250,940 330,900", "380,900 430,970 440,1100", "450,920 540,960 570,1080 640,1160", "700,850 660,920 640,1000", "700,760 690,830 640,930", "0,1340 60,1250 130,1200 180,1180", "60,1130 120,1210 190,1230",
    ],
    dash: [
      "0,800 40,790 90,890 125,850 170,950 210,1030", "210,1030 240,945 310,965 370,900 430,810", "430,810 560,890 610,830 620,760 700,775 760,740 830,660", "450,930 480,1160", "450,930 520,1020 620,1180", "260,1050 330,1150 420,1185", "0,200 50,430 45,560 0,620",
      "785,30 840,90 870,240 960,330 965,520 945,700", "1470,60 1435,200 1515,265 1490,390 1515,470 1510,600 1568,630", "640,1230 660,1440", "1190,670 1290,770 1380,940", "1050,640 1020,760", "1380,1000 1360,1140", "1130,1200 1120,1330", "940,1400 1060,1410",
    ],
    rail: ["0,752 50,740 120,775 200,790 240,860 320,940 380,1040 440,1110 480,1180 540,1245 600,1250 650,1190 680,1220 690,1280 740,1330 750,1440"],
    river: ["570,920 580,980 640,1090 660,1160", "295,1210 305,1300", "345,1380 350,1440", "1480,1290 1568,1360", "1190,420 1215,370", "680,190 680,230"],
    secondary: [
      "480,30 540,90 630,105 640,30", "670,30 670,100 640,100", "640,40 670,40", "530,310 560,320 595,360 590,400 640,455", "1085,150 1060,240 1060,320", "1180,440 1230,510 1300,540 1350,640 1400,685 1440,690 1450,720 1510,715 1560,770 1550,850",
      "755,960 750,820 810,780 870,800 890,850 870,970 880,1020", "870,740 915,790 905,900", "730,980 760,930", "800,990 770,1090 760,1200", "715,1190 720,1270 750,1340 850,1335 930,1380", "830,1000 830,1080 860,1250 850,1380", "880,1020 930,1060 940,1160",
      "300,1105 360,1200 390,1330 440,1440", "195,1045 155,1140 190,1260 170,1370 190,1440", "980,750 1060,820 1095,900 1070,1060 1040,1150", "1060,830 1120,880 1150,1000 1220,1080 1290,1140 1290,1330", "1085,1180 1085,1440", "750,1340 750,1440", "1260,960 1330,1050 1500,1080",
      "1480,1090 1470,1190 1350,1270 1370,1330", "770,1340 850,1250 880,1310", "1020,1180 1010,1230", "1340,1080 1360,1140 1480,1110", "870,1020 920,1000", "890,860 905,920", "640,1170 720,1190 940,1165", "850,1360 800,1420", "1190,1440 1330,1420", "1400,1370 1480,1440", "1240,1130 1310,1190", "1480,1080 1500,1120 1460,1140", "1490,1310 1568,1330", "1420,1010 1460,1040",
      "480,1190 520,1185 560,1225", "1300,1200 1300,1340", "1540,1180 1568,1260",
    ],
    primary: [
      "0,95 30,95 60,30", "380,30 440,80", "560,110 700,105 850,130 900,150", "930,180 1010,200 1035,260", "1060,320 1160,395 1180,470 1240,550 1300,640 1330,710 1400,745 1470,770 1490,870 1520,950", "600,490 700,530 790,600 830,620 840,670 920,750 980,750 1040,820",
      "870,710 850,780", "840,800 820,850 775,880 775,980 720,1015", "870,915 940,945", "960,1130 1020,1135 1060,1165 1110,1115 1130,1130", "0,1400 120,1385 210,1425", "1130,1155 1170,1175", "1420,1400 1460,1440", "1350,1440 1400,1380", "1195,510 1220,515",
    ],
    motorway: [
      "-5,338 70,275 60,230 75,210 90,215 75,280", "95,250 160,170 230,128 400,122 560,125 700,135 830,145 900,162 1000,160 1060,180 1130,212 1250,175 1350,178 1450,203 1568,185", "640,128 760,138 850,160", "410,30 385,80", "720,88 750,88 760,130",
      "1090,115 1060,210 1040,270 990,310 985,430 925,540 915,740 905,770 950,870 940,1000 950,1130 925,1260 935,1440", "985,300 1050,318 1040,290", "950,870 1000,860 1040,825 1150,850 1210,890 1280,940 1410,990 1480,1005 1520,970 1568,960",
      "1410,990 1270,1015 1200,1060 1140,1140 1060,1175 1000,1165 940,1180 850,1165 710,1185 640,1180 590,1220 540,1220 480,1195 380,1225 320,1205 280,1150 260,1090 210,1035 130,965 0,930", "410,1215 440,1260 435,1340 400,1440",
      "1060,1175 1130,1220 1240,1275 1340,1300 1400,1370", "1190,1080 1240,1190 1235,1270 1280,1330", "1400,1370 1480,1270 1530,1170 1530,1060 1568,980", "1380,1340 1410,1380 1395,1380", "900,750 925,745", "1030,815 1055,830", "940,870 965,880", "1510,970 1568,975", "205,1025 220,1050",
    ],
  },
  {
    x: 2320,
    farm: [],
    scrub: [],
    forest: [
      "0,200 60,210 160,260 230,265 230,350 240,420 330,440 320,500 300,560 290,650 240,720 200,800 130,830 100,780 60,720 0,700", "260,150 300,140 340,130 350,200 270,215",
      "480,110 520,90 570,130 590,180 600,220 640,240 640,300 600,350 560,380 500,470 470,440 420,430 400,380 360,300 400,230 370,200 440,180",
      "700,360 730,340 850,280 960,245 1070,260 1090,300 1080,390 1060,420 1020,440 1000,560 930,590 900,640 820,680 700,680 580,680 540,690 500,640 500,590 550,550 560,500 650,475 680,440",
      "1120,330 1150,310 1200,350 1310,380 1320,260 1370,250 1546,290 1546,800 1480,740 1400,700 1360,700 1290,630 1310,590 1290,470 1150,440",
      "850,830 900,760 950,690 1080,680 1240,640 1350,730 1360,870 1250,860 1210,950 1200,1080 1150,1200 1140,1270 1040,1280 980,1240 880,1200 890,1140 950,1080 870,1010 840,980 850,900",
      "590,930 680,940 740,990 760,1040 730,1240 690,1230 620,1120 590,1050", "0,880 60,860 130,890 130,920 20,890", "1390,880 1440,990 1546,1060 1546,1440 1370,1440 1350,1300 1330,1240 1330,1080",
      "700,1260 880,1240 900,1290 1290,1270 1290,1370 1100,1380 1030,1420 1000,1340 820,1330 700,1360", "600,690 780,690 740,780 700,740 640,740", "1130,440 1290,480 1290,600 1240,600", "1040,450 1150,490 1230,590 1230,640 1080,670 960,680 1010,580", "760,840 780,880 720,920 690,900",
    ],
    mint: ["95,500 130,510 135,530 110,530", "385,910 420,905 410,930 390,930", "245,1240 265,1250 260,1290 245,1280", "740,1380 780,1350 770,1390"],
    clearing: ["580,150 640,150 645,190 600,220 580,190", "920,590 990,590 980,640 930,680", "1050,370 1085,380 1040,470 1020,560 1005,540", "750,820 840,800 760,900 700,920 650,920 700,870", "1130,270 1170,320 1310,380 1320,250 1230,190 1150,240 1080,260", "790,940 820,880 840,990 920,1080 910,1150 830,1140 770,1060", "1240,670 1290,670 1350,740 1350,860 1260,770", "240,690 290,700 290,800 240,800", "1170,1130 1280,1040 1210,1150 1190,1290 1150,1270", "860,290 880,290 870,340 850,330", "1290,460 1330,460 1300,500", "1090,580 1080,650", "330,400 480,470 480,510 380,480 330,500"],
    grey: ["200,120 260,140 220,210 180,180", "280,350 340,350 330,400 280,400", "180,830 220,840 220,890 185,890", "60,740 100,740 90,790", "890,600 940,610 930,640", "300,960 400,970 400,1000 310,1000", "1190,1060 1230,1080 1200,1140", "1320,790 1350,790 1340,860", "140,960 210,980 200,1040", "1130,1400 1280,1390 1280,1440 1130,1440", "0,30 40,40 50,60 0,60"],
    water: [
      "20,30 1550,30 1550,288 1460,268 1380,245 1310,220 1265,200 1235,185 1210,205 1180,215 1130,215 1075,205 1070,250 1000,262 930,245 860,240 850,275 810,275 800,305 750,320 680,365 675,440 650,475 550,495 545,550 510,575 490,600 505,640 485,715 540,745 560,800 585,850 540,900 470,920 455,1000 460,1080 425,1110 400,1200 410,1260 340,1310 260,1350 200,1440 70,1440 150,1370 190,1310 330,1270 370,1160 400,1110 375,1080 420,1060 415,960 440,890 485,820 460,770 430,740 420,690 355,630 400,590 450,590 490,530 500,470 560,380 600,350 640,300 630,240 660,180 600,130 560,120 520,90 490,100 480,75 440,65 390,55 350,60 340,110 280,120 200,110 110,80 50,65",
      "-10,1350 30,1370 10,1390 -10,1380",
    ],
    minor: [
      "110,100 140,160 205,210 205,245", "110,100 200,120 260,140", "410,180 430,180 480,120", "380,100 410,130 400,200", "0,550 60,490 150,500 155,560 240,640 270,690", "160,480 150,540 210,700 220,810", "330,440 330,500 370,540", "240,430 330,440 480,400 530,330 600,250", "470,400 490,340", "430,390 440,310",
      "600,520 700,510 720,560 700,610", "560,500 640,520", "780,450 775,540 750,640", "850,450 860,530 900,590 850,640 720,640 640,680", "920,440 900,560", "980,520 910,530 890,600", "1080,270 1085,330 1060,420 1020,520 1000,590 950,660 970,690 1090,680", "960,670 1080,650 1140,670 1200,620 1300,610 1400,590 1440,640 1500,660 1540,620",
      "1100,570 1060,610 1080,650", "1240,690 1320,770 1400,810 1430,790", "1240,690 1290,660", "850,920 910,910 1040,900 1110,840 1250,820", "840,830 850,920 860,1000 940,1060", "880,690 830,760 780,830 720,850", "780,830 820,860 800,920 760,1020 740,1110 750,1180 740,1250", "620,1000 700,1000 760,1040", "760,1060 820,1130 870,1200 910,1260",
      "1250,910 1220,1000 1180,1100 1180,1250", "1210,930 1270,880 1310,860", "1410,900 1470,970 1546,1010", "1140,230 1160,290 1230,200 1280,250 1380,250", "1090,240 1180,220 1230,190", "1040,500 1050,440", "700,440 700,570", "600,850 640,830 700,850", "590,860 650,880 600,920", "540,600 560,670 540,720", "560,620 620,590",
      "1000,1330 1060,1360 1180,1330 1290,1340", "700,1280 760,1200 830,1200", "880,1240 920,1330 960,1400", "150,910 180,960 160,1020", "830,290 850,340 820,400", "330,650 360,690 420,700", "560,1200 640,1240 670,1290",
    ],
    dash: [
      "0,630 50,625 90,650 90,690 60,740", "1546,380 1505,410 1510,540 1540,620", "350,60 390,55 440,67 480,80 520,92 600,132 660,182 632,240 642,300 600,352 560,382 500,472", "680,365 750,322 800,307 850,277 930,247 1000,264 1070,252 1075,207 1180,217 1235,187 1310,222 1460,270 1546,290",
      "20,30 50,67 110,82 200,112 280,122 340,112", "1020,1050 1025,1150 1045,1200 960,1240", "1340,1250 1420,1255 1546,1250", "1210,930 1220,870 1290,840 1370,770 1430,800", "540,1170 620,1180 670,1240", "240,940 320,965 300,1010", "130,1170 200,1170 180,1290", "550,1210 560,1300",
    ],
    river: ["1075,260 1085,290 1130,340 1140,440 1200,460 1290,470 1295,600", "615,1110 680,1095 700,1150 740,1160 740,1190", "680,1100 730,1060", "1128,560 1130,580"],
    ferry: ["755,30 735,130 715,230 710,270", "930,30 850,120 770,220 700,280", "980,30 860,150 710,275 640,340 540,450 500,500", "500,510 440,600 440,700 490,770 510,820 450,890 430,1000 400,1100 390,1200 330,1280 200,1340", "515,510 440,600", "480,760 530,800 470,880", "420,1080 370,1200 370,1260", "330,1290 240,1340 150,1400", "300,1310 180,1370"],
    secondary: [
      "340,110 365,160 345,220 325,280 250,360 230,430", "350,625 420,570", "345,640 400,690 440,750 485,820 440,880 420,960 420,1060 370,1080 380,1150 335,1200 330,1260 190,1305", "545,685 545,740 590,800 600,850 540,900 460,940 455,1080 500,1130 560,1180",
      "907,590 915,660 900,700 830,740 810,800 740,840", "780,745 810,800", "0,725 45,760 40,850 75,850 80,890 140,890 150,910 240,905", "310,725 370,750 420,740", "330,890 340,840 380,840 400,870", "540,915 550,980 540,1030", "410,1120 400,1260 240,1370 220,1440", "240,1160 220,1290",
      "0,1320 40,1310 150,1300", "130,1170 150,1300", "60,1180 90,1230 55,1310 60,1400", "475,1330 490,1350 470,1355 465,1335 475,1330 470,1390", "250,1390 330,1375 370,1410 300,1430 250,1390", "110,980 125,1020 80,1080 20,1160", "80,1160 0,1260", "100,1310 20,1390", "540,910 590,915", "400,1400 450,1410", "700,1400 740,1440", "500,1390 640,1385",
    ],
    primary: ["320,585 295,640 310,660 290,780 295,910", "240,915 300,910 370,890 440,880", "240,930 215,990 225,1060 255,1140", "300,655 345,650", "345,530 400,535", "603,685 625,740 690,738 740,800", "700,850 660,900 590,950 585,1020 500,1075", "1546,1050 1480,1070 1435,1160 1370,1240 1320,1300 1300,1370 1295,1440", "1050,1420 1120,1385 1280,1370", "540,1380 600,1360 690,1370 720,1410 780,1340", "850,1340 910,1390 935,1440", "385,1405 420,1400", "0,910 5,1000"],
    motorway: [
      "0,185 60,190 130,230 190,260 250,245 290,228 380,228 450,218 510,240 570,310 650,360 715,400 735,402", "275,225 300,180 330,155 350,160", "884,396 920,402 960,428 1040,435 1150,490 1240,590 1350,710 1358,850 1385,890 1370,990 1320,1120 1318,1250 1310,1330 1280,1440",
      "1365,870 1440,870", "985,425 1045,430", "0,965 100,955 220,955 300,1000 390,1015 540,1005 570,1030 600,1090 680,1200 690,1250 780,1252 880,1238 920,1212 985,1250 1050,1290 1150,1272 1240,1275 1320,1245", "685,1240 688,1440", "985,1250 978,1360 1000,1430",
      "55,1190 100,1145 240,1155 260,1200 320,1260 370,1340 385,1410", "20,1090 20,1180", "50,965 25,1010", "240,1050 280,1010", "975,1255 1000,1250", "1270,1370 1305,1360", "250,1215 265,1205", "1355,860 1375,880", "0,980 50,970",
    ],
  },
];

const AREA_LAYERS = [
  ["farm", "#eff1db"],
  ["scrub", "#d5ecc5"],
  ["grey", "#d9d8d6"],
  ["pale", "#e9e9e4"],
  ["forest", "#bddab1"],
  ["clearing", "#f3efea"],
  ["mint", "#cdf5d8"],
  ["hatch", "url(#hatch)"],
  ["quarry", "#c6c4aa"],
  ["water", "#aad3df"],
];

const LINE_LAYERS = [
  ["river", "#9dd0e2", 3],
  ["minor", "#c9c8c7", 1.8],
  ["dash", "#c0acc4", 1.7, "9 3 2 3"],
  ["border", "#b9a4be", 3.2],
  ["rail", "#979a99", 2],
  ["ferry", "#8ea9f0", 1.8, "8 6"],
  ["secondary", "#f5c57e", 3.8],
  ["primary", "#f7977a", 4.4],
  ["motorway", "#e7708b", 5],
];

function parse(points) {
  return points.split(" ").map((p) => p.split(",").map(Number));
}

function areaPath(points) {
  const pts = parse(points);
  const out = [];
  pts.forEach((p, i) => {
    const q = pts[(i + 1) % pts.length];
    const dx = q[0] - p[0];
    const dy = q[1] - p[1];
    const len = Math.hypot(dx, dy);
    out.push(p);
    const steps = Math.min(12, Math.floor(len / 22));
    const straight = Math.abs(dx) < 1 || Math.abs(dy) < 1;
    for (let k = 1; k < steps && !straight; k += 1) {
      const t = k / steps;
      const wobble = Math.sin(p[0] * 1.7 + p[1] * 2.3 + k * 2.9) * 5;
      out.push([p[0] + dx * t - (dy / len) * wobble, p[1] + dy * t + (dx / len) * wobble]);
    }
  });
  return `M${out.map((p) => `${p[0].toFixed(1)} ${p[1].toFixed(1)}`).join("L")}Z`;
}

function linePath(points) {
  const p = parse(points);
  let d = `M${p[0]}`;
  for (let i = 0; i < p.length - 1; i += 1) {
    const a = p[i - 1] || p[i];
    const b = p[i];
    const c = p[i + 1];
    const e = p[i + 2] || c;
    const f = 7;
    d += `C${b[0] + (c[0] - a[0]) / f} ${b[1] + (c[1] - a[1]) / f} ${c[0] - (e[0] - b[0]) / f} ${c[1] - (e[1] - b[1]) / f} ${c[0]} ${c[1]}`;
  }
  return d;
}

/* Built-up districts: centre, radii and number of streets. */
const DISTRICTS = [
  [1865, 2205, 50, 35, 60], [1925, 2150, 60, 40, 50], [2060, 2120, 50, 60, 60], [2090, 2200, 60, 45, 80],
  [2190, 2195, 70, 45, 110], [2270, 2160, 60, 60, 110], [2320, 2200, 40, 35, 60], [2395, 2130, 40, 45, 70],
  [2510, 2190, 55, 50, 90], [2425, 2195, 30, 30, 35], [2530, 2130, 30, 30, 25], [2600, 2090, 40, 40, 35], [2640, 2225, 60, 22, 40],
  [2200, 2080, 50, 30, 45], [2020, 1900, 50, 25, 40], [1720, 2220, 45, 20, 30], [2495, 2050, 22, 20, 16],
  [2445, 2020, 20, 22, 16], [2420, 1930, 35, 20, 16], [2760, 2225, 30, 18, 30], [2610, 2170, 30, 25, 20],
];

function districtStreets() {
  let seed = 4217;
  const rnd = () => {
    seed = (seed * 16807) % 2147483647;
    return seed / 2147483647;
  };
  let d = "";
  DISTRICTS.forEach(([cx, cy, rx, ry, n]) => {
    for (let i = 0; i < n; i += 1) {
      const a = rnd() * 6.283;
      const r = Math.sqrt(rnd());
      let x = cx + Math.cos(a) * rx * r;
      let y = cy + Math.sin(a) * ry * r;
      let dir = rnd() * 6.283;
      d += `M${x.toFixed(1)} ${y.toFixed(1)}`;
      for (let k = 0; k < 3; k += 1) {
        dir += (rnd() - 0.5) * 1.3;
        const step = 5 + rnd() * 9;
        x += Math.cos(dir) * step;
        y += Math.sin(dir) * step;
        d += `L${x.toFixed(1)} ${y.toFixed(1)}`;
      }
    }
  });
  return d;
}

const STREETS = districtStreets();

const Label = styled.text`
  font-family: "Noto Sans", sans-serif;
  font-size: 20px;
  font-style: ${(p) => (p.$kind === "town" ? "normal" : "italic")};
  fill: ${(p) => ({ town: "#444", district: "#a583ab", wood: "#6b8766" })[p.$kind]};
  stroke: ${(p) => (p.$kind === "wood" ? "rgba(255,255,255,.35)" : "rgba(255,255,255,.75)")};
  stroke-width: 3px;
  paint-order: stroke;
  stroke-linejoin: round;
  text-anchor: middle;
`;

const ShieldText = styled.text`
  font-family: "Noto Sans", sans-serif;
  font-size: 20px;
  fill: #7c3d54;
  stroke: #7c3d54;
  stroke-width: 0.4px;
  text-anchor: middle;
`;

const LABELS = [
  ["district", "Silivri", 1218, 1897, 49], ["district", "Kapaklı Velisi", 673, 2203, 120],
  ["town", "Çatalca", 1604.500, 2005, 67], ["town", "Silivri", 1293, 2136.500, 49], ["district", "Büyükçekmece", 1746, 2170, 128],
  ["district", "Arnavutköy", 1924, 1800, 100], ["town", "Arnavutköy", 2011, 1923.500, 107], ["district", "Eyüpsultan", 2218, 1961, 97],
  ["wood", "Fatih Ormanı", 2153, 1977, 116], ["town", "Başakşehir", 2106, 2091, 101], ["town", "Esenyurt", 1922, 2214, 81], ["town", "Bağcılar", 2182, 2216, 74],
  ["town", "Gaziosmanpaşa", 2265, 2169, 147], ["town", "Kağıthane", 2348.500, 2116.500, 95], ["town", "Beyoğlu", 2349.500, 2228, 75],
  ["town", "Sarıyer", 2467.500, 1950.500, 65], ["town", "Beykoz", 2546, 2041, 65], ["district", "Beykoz", 2712, 2012.500, 60],
  ["wood", "Polonezköy", 2702.500, 2080.500, 98], ["wood", "Ormanı", 2702, 2104, 66], ["town", "Çekmeköy", 2643.500, 2204, 97], ["town", "Ümraniye", 2519.500, 2239, 90],
];

const SHIELDS = [["O-3", 775, 1825], ["O-7", 1091, 2101], ["O-7", 2580.500, 1874], ["O-6", 2834.500, 2021.500]];

function OfficeMap() {
  const inSheets = (kind, render) =>
    SHEETS.map((sheet) => (
      <g key={kind + sheet.x} transform={`translate(${sheet.x} 1760) scale(.357143 .333333)`}>
        {(sheet[kind] || []).map(render)}
      </g>
    ));
  return (
    <MapFrame>
      <MapCanvas viewBox="712 1770 2160 470">
        <defs>
          <pattern id="hatch" width="26" height="26" patternUnits="userSpaceOnUse" patternTransform="rotate(35)">
            <rect width="26" height="26" fill="#f7e6da" />
            <path d="M0 0v26" stroke="#f5c9c0" strokeWidth="4" />
          </pattern>
        </defs>
        {AREA_LAYERS.map(([kind, fill]) => inSheets(kind, (pts) => <path key={pts} d={areaPath(pts)} fill={fill} />))}
        <path d={STREETS} fill="none" stroke="#c8c7c6" strokeWidth="1.400" />
        {LINE_LAYERS.map(([kind, stroke, width, dash]) =>
          inSheets(kind, (pts) => (
            <path
              key={pts}
              d={linePath(pts)}
              fill="none"
              stroke={stroke}
              strokeWidth={width}
              strokeDasharray={dash}
              strokeLinejoin="round"
              strokeLinecap={dash ? "butt" : "round"}
              vectorEffect="non-scaling-stroke"
            />
          ))
        )}
        <ellipse cx="1200" cy="2041" rx="9" ry="5" fill="#e7708b" />
        <circle cx="1817" cy="2254" r="18" fill="#2a78c4" />
        <MdFlight x="790" y="1982" size={28} color="#8461c4" />
        {SHIELDS.map(([text, x, y]) => (
          <g key={text + x}>
            <rect x={x} y={y - 1} width="54" height="35" rx="4" fill="#ebc9cf" stroke="#d9a0aa" strokeWidth="2" />
            <ShieldText x={x + 27} y={y + 23.500} textLength="32">{text}</ShieldText>
          </g>
        ))}
        {LABELS.map(([kind, text, x, y, width]) => (
          <Label key={text + x} $kind={kind} x={x} y={y} textLength={width}>{text}</Label>
        ))}
      </MapCanvas>
      <ZoomControl>
        <ZoomButton $first>+</ZoomButton>
        <ZoomButton>−</ZoomButton>
      </ZoomControl>
    </MapFrame>
  );
}

export default function App() {
  return (
    <Window>
      <GlobalStyle />
      <BrowserTabs />
      <BrowserToolbar />
      <Page>
        <OfficeGrid>
          {OFFICES.map((name, i) => (
            <OfficeButton key={name} $selected={i === 0}>{name}</OfficeButton>
          ))}
        </OfficeGrid>
        <Card>
          <CardTitle>Büyükçekmece Bölgesel İstihdam Ofisi</CardTitle>
          <Plain>Büyükçekmece Bölgesel İstihdam Ofisi</Plain>
          <InfoRow $top={38}>
            <PinIcon />
            <div>
              <InfoTitle $color={PINK}>Adres</InfoTitle>
              <Address>Fatih Mahallesi Adnan Kahveci Cad. No: 34/B Büyükçekmece</Address>
            </div>
          </InfoRow>
          <InfoRow $top={70}>
            <AdvisorsIcon />
            <div>
              <InfoTitle $color={BLUE}>Kariyer Danışmanlarımız</InfoTitle>
              <People>
                {ADVISORS.map((name) => (
                  <li key={name}>{name}</li>
                ))}
              </People>
            </div>
          </InfoRow>
        </Card>
        <MapTitle>Haritada Nerede?</MapTitle>
        <OfficeMap />
      </Page>
    </Window>
  );
}
